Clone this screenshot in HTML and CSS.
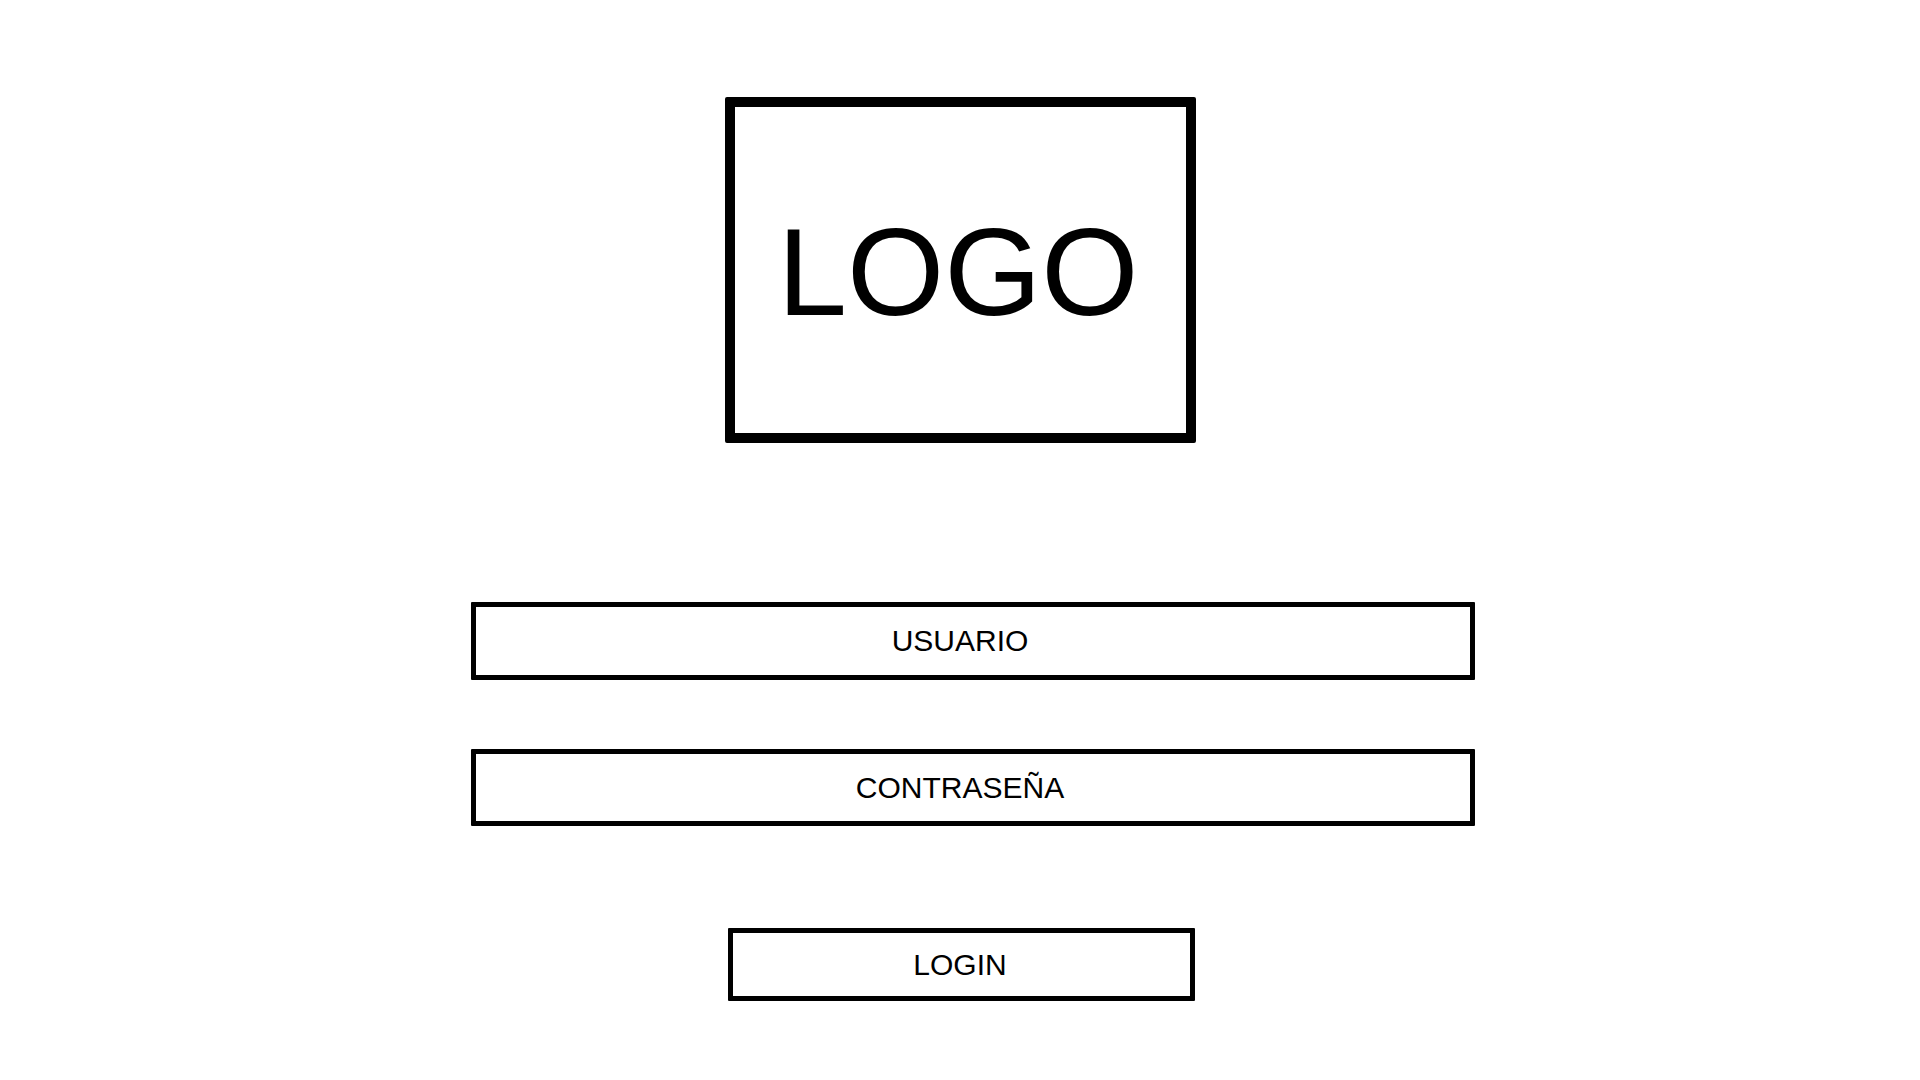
FILE: index.html
```html
<!DOCTYPE html>
<html lang="es">
<head>
<meta charset="utf-8">
<title>Login</title>
<link rel="stylesheet" href="styles.css">
</head>
<body>
<main class="page">
  <div class="logo"><span class="logo-text">LOGO</span></div>
  <div class="field field-user"><span>USUARIO</span></div>
  <div class="field field-pass"><span>CONTRASEÑA</span></div>
  <div class="login-btn"><span>LOGIN</span></div>
</main>
</body>
</html>
```

FILE: styles.css
```css
html, body {
  margin: 0;
  padding: 0;
  background: #ffffff;
}

body {
  font-family: "Liberation Sans", Arial, sans-serif;
  color: #000000;
}

.page {
  width: 1920px;
  height: 1080px;
  box-sizing: border-box;
  padding-top: 97px;
  display: flex;
  flex-direction: column;
  align-items: center;
}

.logo {
  width: 471px;
  height: 346px;
  box-sizing: border-box;
  border: 10px solid #000;
  border-radius: 2px;
  display: flex;
  align-items: center;
  justify-content: center;
}

.logo-text {
  font-size: 125px;
  line-height: 1;
  margin-right: 4px;
  margin-top: 2px;
}

.field {
  width: 1004px;
  height: 78px;
  box-sizing: border-box;
  border: 5px solid #000;
  border-radius: 1px;
  margin-left: 26px;
  padding-right: 26px;
  display: flex;
  align-items: center;
  justify-content: center;
  font-size: 30px;
}

.field-user {
  margin-top: 159px;
}

.field-pass {
  margin-top: 69px;
  height: 77px;
}

.login-btn {
  width: 467px;
  height: 73px;
  box-sizing: border-box;
  border: 5px solid #000;
  border-radius: 1px;
  margin-top: 102px;
  margin-left: 3px;
  padding-right: 3px;
  display: flex;
  align-items: center;
  justify-content: center;
  font-size: 30px;
}
```
